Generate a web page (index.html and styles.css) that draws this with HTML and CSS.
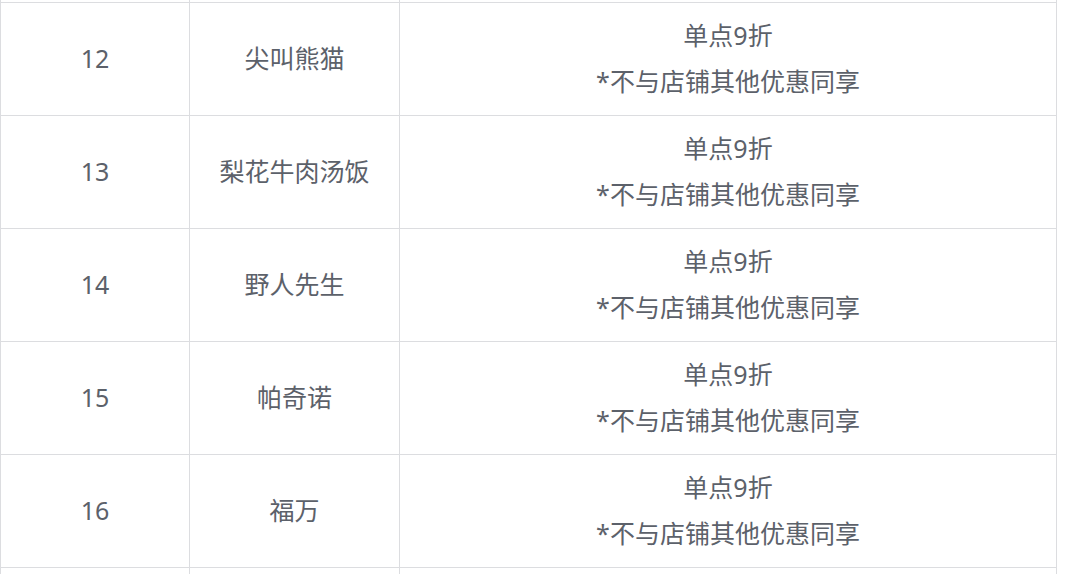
FILE: index.html
```html
<!DOCTYPE html>
<html lang="zh-CN">
<head>
<meta charset="utf-8">
<title>优惠商户</title>
<link rel="stylesheet" href="styles.css">
</head>
<body>
<div class="wrap">
<table class="deals">
  <colgroup>
    <col class="c-no">
    <col class="c-name">
    <col class="c-offer">
  </colgroup>
  <tbody>
    <tr class="edge-top"><td></td><td></td><td></td></tr>
    <tr><td>12</td><td>尖叫熊猫</td><td><div>单点9折</div><div>*不与店铺其他优惠同享</div></td></tr>
    <tr><td>13</td><td>梨花牛肉汤饭</td><td><div>单点9折</div><div>*不与店铺其他优惠同享</div></td></tr>
    <tr><td>14</td><td>野人先生</td><td><div>单点9折</div><div>*不与店铺其他优惠同享</div></td></tr>
    <tr><td>15</td><td>帕奇诺</td><td><div>单点9折</div><div>*不与店铺其他优惠同享</div></td></tr>
    <tr><td>16</td><td>福万</td><td><div>单点9折</div><div>*不与店铺其他优惠同享</div></td></tr>
    <tr class="edge-bottom"><td></td><td></td><td></td></tr>
  </tbody>
</table>
</div>
</body>
</html>
```

FILE: styles.css
```css
html, body {
  margin: 0;
  padding: 0;
  background: #ffffff;
}
.wrap {
  height: 574px;
  overflow: hidden;
}
.deals {
  margin-top: -1px;
  width: 1056px;
  table-layout: fixed;
  border-collapse: collapse;
  font-family: "Noto Sans", "Noto Sans CJK SC", sans-serif;
  font-size: 25px;
  font-weight: 400;
  color: #5c616a;
}
.c-no { width: 189px; }
.c-name { width: 210px; }
.c-offer { width: 657px; }
.deals td {
  border: 1px solid #dcdde0;
  text-align: center;
  vertical-align: middle;
  padding: 9px 0 11px;
  line-height: 46px;
  height: 92px;
}
.deals .edge-top td {
  height: 2px;
  padding: 0;
  line-height: 0;
}
.deals .edge-bottom td {
  height: 20px;
  padding: 0;
  line-height: 0;
}
```
